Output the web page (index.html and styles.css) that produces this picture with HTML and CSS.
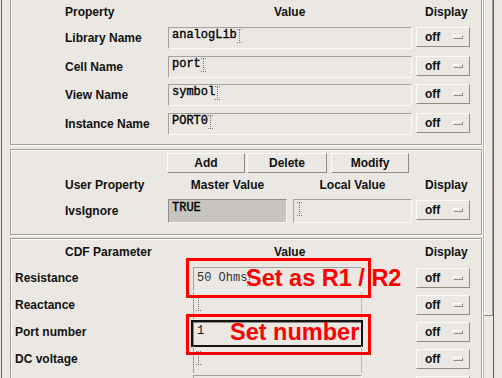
FILE: index.html
```html
<!DOCTYPE html>
<html>
<head>
<meta charset="utf-8">
<link rel="stylesheet" href="styles.css">
</head>
<body>
<div class="screen">
  <div class="main">
    <section class="frame f1">
      <div class="hdr lab">Property</div>
      <div class="hdr val1">Value</div>
      <div></div>
      <div class="hdr disp">Display</div>

      <div class="lab">Library Name</div>
      <div class="box">analogLib<svg class="cur" width="5" height="14" viewBox="0 0 5 14"><path d="M0 .5h5M0 13.5h5M2.5 1v12" stroke="#7a7773" stroke-dasharray="1 1"/></svg></div>
      <div></div>
      <div class="off">off<span class="ind"></span></div>

      <div class="lab">Cell Name</div>
      <div class="box">port<svg class="cur" width="5" height="14" viewBox="0 0 5 14"><path d="M0 .5h5M0 13.5h5M2.5 1v12" stroke="#7a7773" stroke-dasharray="1 1"/></svg></div>
      <div></div>
      <div class="off">off<span class="ind"></span></div>

      <div class="lab">View Name</div>
      <div class="box">symbol<svg class="cur" width="5" height="14" viewBox="0 0 5 14"><path d="M0 .5h5M0 13.5h5M2.5 1v12" stroke="#7a7773" stroke-dasharray="1 1"/></svg></div>
      <div></div>
      <div class="off">off<span class="ind"></span></div>

      <div class="lab">Instance Name</div>
      <div class="box">PORT0<svg class="cur" width="5" height="14" viewBox="0 0 5 14"><path d="M0 .5h5M0 13.5h5M2.5 1v12" stroke="#7a7773" stroke-dasharray="1 1"/></svg></div>
      <div></div>
      <div class="off">off<span class="ind"></span></div>
    </section>

    <section class="frame f2">
      <div></div>
      <div class="btns">
        <div class="btn b-add">Add</div>
        <div class="btn b-del">Delete</div>
        <div class="btn b-mod">Modify</div>
      </div>
      <div></div>

      <div class="hdr2 lab">User Property</div>
      <div class="hdr2 ctr">Master Value</div>
      <div></div>
      <div class="hdr2 ctr">Local Value</div>
      <div></div>
      <div class="hdr2 disp">Display</div>

      <div class="lab">IvsIgnore</div>
      <div class="box filled">TRUE</div>
      <div></div>
      <div class="box"><svg class="cur" width="5" height="14" viewBox="0 0 5 14"><path d="M0 .5h5M0 13.5h5M2.5 1v12" stroke="#7a7773" stroke-dasharray="1 1"/></svg></div>
      <div></div>
      <div class="off off2">off<span class="ind"></span></div>
    </section>

    <section class="frame f3">
      <div class="hdr3 lab3h">CDF Parameter</div>
      <div class="hdr3 val3">Value</div>
      <div></div>
      <div class="hdr3 disp">Display</div>

      <div class="lab3">Resistance</div>
      <div class="box res">50 Ohms<svg class="cur" width="5" height="14" viewBox="0 0 5 14"><path d="M0 .5h5M0 13.5h5M2.5 1v12" stroke="#7a7773" stroke-dasharray="1 1"/></svg></div>
      <div></div>
      <div class="off">off<span class="ind"></span></div>

      <div class="lab3">Reactance</div>
      <div class="empty"><svg class="cur" width="5" height="14" viewBox="0 0 5 14"><path d="M0 .5h5M0 13.5h5M2.5 1v12" stroke="#7a7773" stroke-dasharray="1 1"/></svg></div>
      <div></div>
      <div class="off">off<span class="ind"></span></div>

      <div class="lab3">Port number</div>
      <div class="portbox">1</div>
      <div></div>
      <div class="off">off<span class="ind"></span></div>

      <div class="lab3">DC voltage</div>
      <div class="empty"><svg class="cur" width="5" height="14" viewBox="0 0 5 14"><path d="M0 .5h5M0 13.5h5M2.5 1v12" stroke="#7a7773" stroke-dasharray="1 1"/></svg></div>
      <div></div>
      <div class="off">off<span class="ind"></span></div>

      <div class="lab3"></div>
      <div class="box"></div>
      <div></div>
      <div class="off"></div>

      <div class="mark mark1"></div>
      <div class="mark mark2"></div>
      <div class="note note1">Set as R1 / R2</div>
      <div class="note note2">Set number</div>
    </section>
  </div>
  <div class="scroll"><div class="thumb"></div></div>
</div>
</body>
</html>
```

FILE: styles.css
```css
html, body {
  margin: 0;
  height: 100%;
  overflow: hidden;
  background: #ebe8e3;
}

.screen {
  display: flex;
  height: 378px;
  overflow: hidden;
  font-family: "Liberation Sans", Arial, sans-serif;
  font-size: 12px;
  font-weight: bold;
  color: #111;
}

.main {
  width: 472px;
  flex: none;
  margin-left: 1px;
  border-left: 1px solid #6b6864;
  padding-left: 8px;
  display: flex;
  flex-direction: column;
}

.frame {
  border: 1px solid #a19e99;
  box-shadow: inset 1px 1px 0 #fff, 1px 1px 0 #fff;
  display: grid;
  align-items: start;
}

/* ---------- section 1 ---------- */
.f1 {
  margin-top: -3px;
  padding-bottom: 9px;
  grid-template-columns: 157px 244px 4px 54px;
  grid-template-rows: 22.33px repeat(4, 22px);
  row-gap: 6.67px;
}

.hdr {
  line-height: 14px;
  padding-top: 7px;
}

.lab {
  padding-left: 54px;
  line-height: 22px;
  white-space: nowrap;
}

.hdr.lab { line-height: 14px; }

.val1 { padding-left: 106px; }

.disp { padding-left: 9px; }

.box {
  box-sizing: border-box;
  height: 22px;
  border: 1px solid;
  border-color: #a4a19c #fbfaf8 #fbfaf8 #a4a19c;
  padding: 0 0 0 3px;
  font-family: "Liberation Mono", "Courier New", monospace;
  font-weight: normal;
  font-size: 12px;
  line-height: 14px;
  color: #000;
  -webkit-text-stroke: 0.35px #000;
  white-space: nowrap;
  display: flex;
  align-items: flex-start;
}

.cur {
  display: block;
  margin-top: 1px;
  flex: none;
}

.off {
  box-sizing: border-box;
  height: 20px;
  border: 1px solid;
  border-color: #fcfbf9 #8f8c87 #8f8c87 #fcfbf9;
  display: flex;
  align-items: center;
  padding-left: 8px;
  line-height: 14px;
}

.ind {
  box-sizing: border-box;
  width: 10px;
  height: 4px;
  margin-left: auto;
  margin-right: 6px;
  border: 1px solid;
  border-color: #fff #8f8c87 #8f8c87 #fff;
}

/* ---------- section 2 ---------- */
.f2 {
  margin-top: 4px;
  padding-top: 3px;
  padding-bottom: 11px;
  grid-template-columns: 157px 119px 6px 119px 4px 54px;
  grid-template-rows: 20px 26px 24px;
  row-gap: 0;
}

.btns {
  grid-column: 2 / 6;
  display: flex;
  margin-left: -1px;
}

.btn {
  box-sizing: border-box;
  height: 20px;
  border: 1px solid;
  border-color: #fcfbf9 #8f8c87 #8f8c87 #fcfbf9;
  text-align: center;
  line-height: 18px;
}

.b-add { width: 78px; }
.b-del { width: 80px; margin-left: 2px; }
.b-mod { width: 78px; margin-left: 4px; }

.hdr2 {
  line-height: 24px;
}

.hdr2.lab { line-height: 24px; }

.ctr { text-align: center; }

.f2 .box { height: 24px; padding-top: 1px; }
.f2 .lab { line-height: 20px; margin-top: 2px; }

.filled {
  background: #c8c5c0;
  border-color: #918e89 #f6f4f1 #f6f4f1 #918e89;
}

.off2 { margin-top: 1px; }

/* ---------- section 3 ---------- */
.f3 {
  position: relative;
  margin-top: 3px;
  grid-template-columns: 182px 169px 54px 54px;
  grid-template-rows: 23px repeat(5, 22px);
  row-gap: 5px;
}

.hdr3 {
  line-height: 14px;
  padding-top: 6px;
}

.lab3h { padding-left: 54px; }

.val3 { padding-left: 81px; }

.lab3 {
  padding-left: 4px;
  line-height: 22px;
  white-space: nowrap;
}

.res {
  height: 24px;
  padding-top: 3px;
  color: #333;
  -webkit-text-stroke: 0;
}

.empty {
  box-sizing: border-box;
  height: 27px;
  margin-top: -2px;
  border-left: 1px solid #a4a19c;
  border-right: 1px solid #bdbab5;
  padding: 4px 0 0 2px;
}

.portbox {
  box-sizing: border-box;
  height: 27px;
  margin: -1px 0 0 -2px;
  width: 172px;
  border: 2px solid #141414;
  box-shadow: inset 1px 1px 0 #8f8c87;
  padding: 2px 0 0 4px;
  font-family: "Liberation Mono", "Courier New", monospace;
  font-weight: normal;
  font-size: 12px;
  line-height: 14px;
}

.f3 .off { margin-top: 1px; }

.mark {
  position: absolute;
  box-sizing: border-box;
  left: 175px;
  width: 185px;
  border: 3px solid #f00;
}

.mark1 { top: 19px; height: 40px; }
.mark2 { top: 75px; height: 41px; }

.note {
  position: absolute;
  color: #f00;
  font-size: 23.5px;
  line-height: 23.5px;
  white-space: nowrap;
}

.note1 { left: 235px; top: 28px; }
.note2 { left: 219px; top: 82px; }

/* ---------- scrollbar ---------- */
.scroll {
  flex: none;
  width: 9px;
  margin-left: 1px;
  border-left: 1px solid #b9b6b1;
  border-right: 1px solid #5e5b57;
}

.thumb {
  height: 315px;
  border-bottom: 1px solid #8d8a86;
  box-shadow: inset 1px 0 0 #fff, inset -1px 0 0 #a5a29d;
}
```
